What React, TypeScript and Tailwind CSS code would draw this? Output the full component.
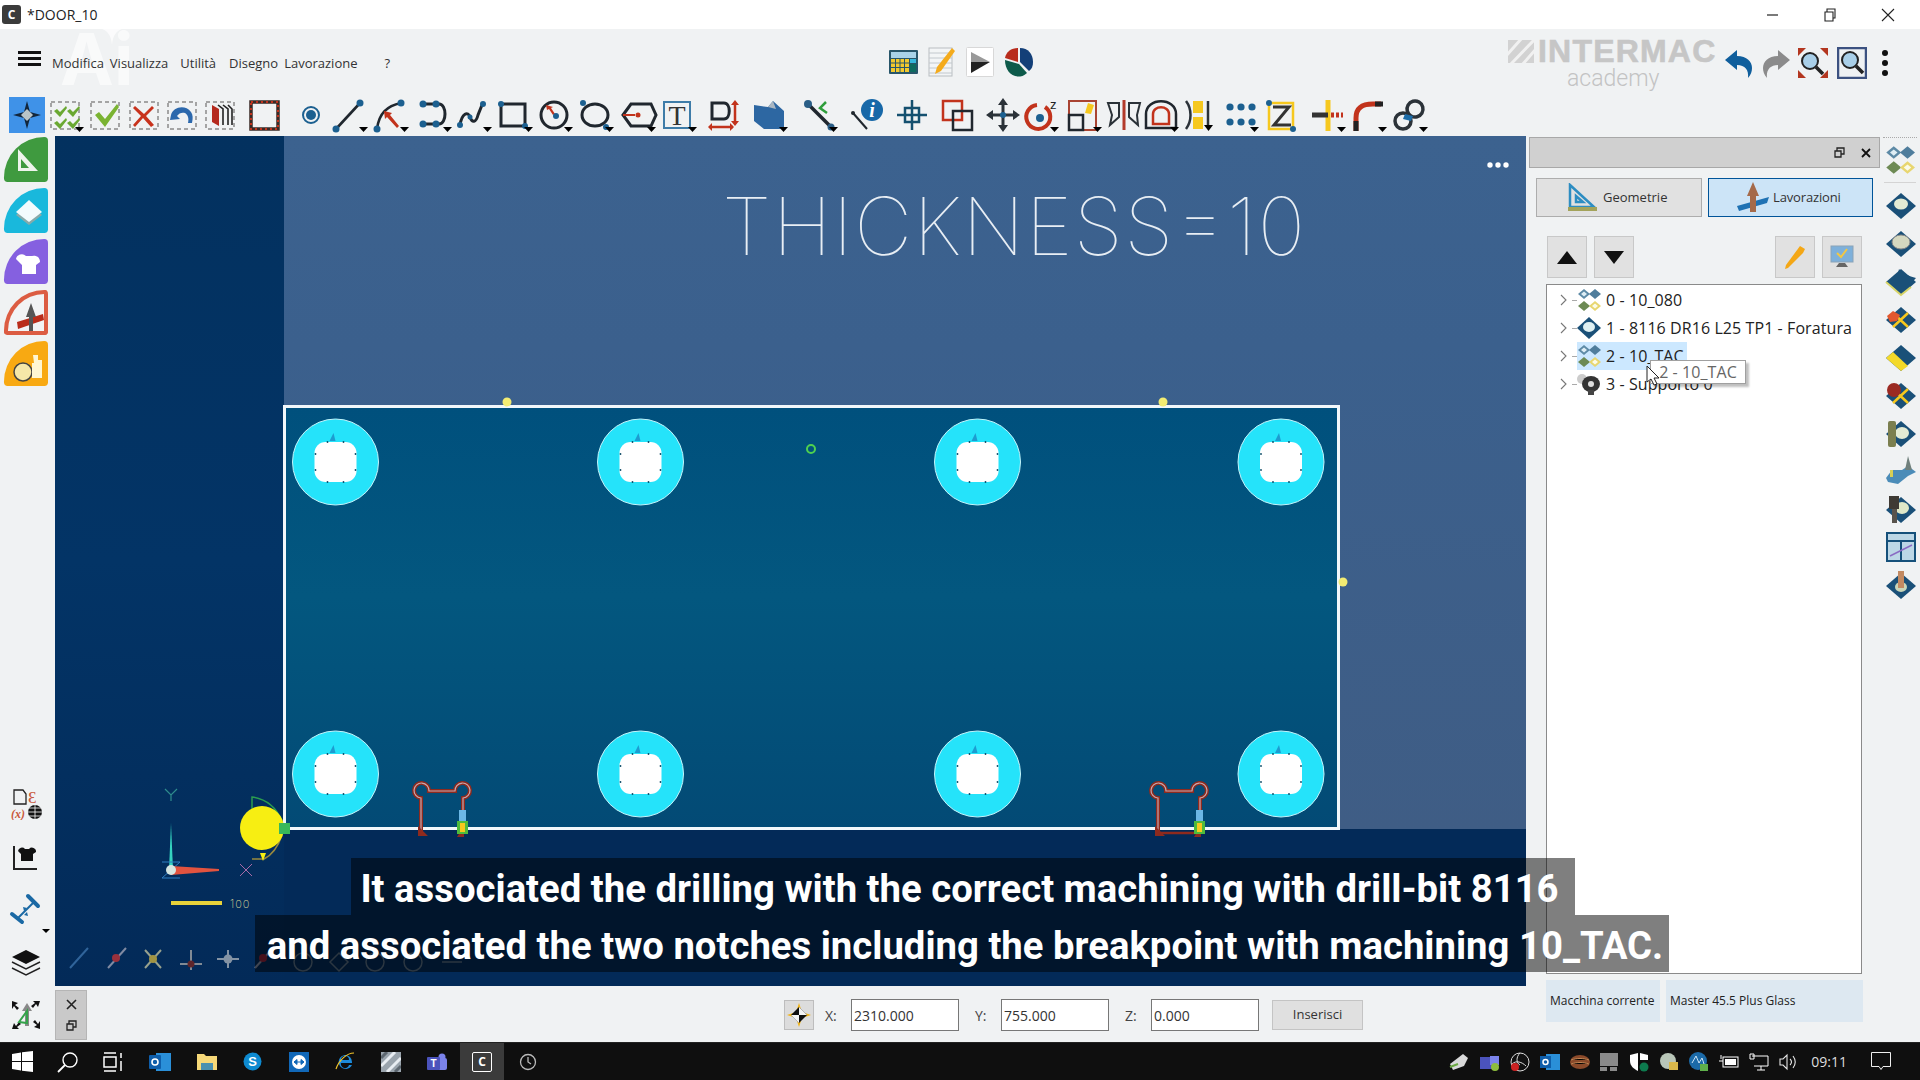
import React from "react";

const DK = "#20272e";
const BL = "#1c6090";
const RD = "#c2331c";
const YL = "#f6c81e";

const Caret = () => <path d="M27 30h9l-4.5 5z" fill="#000" />;
const Dash = () => <rect x="3" y="5" width="28" height="27" fill="none" stroke="#8a8a8a" strokeWidth="1.5" strokeDasharray="4 3" />;
const Dot = ({ x, y, r = 3, c = BL }: { x: number; y: number; r?: number; c?: string }) => <circle cx={x} cy={y} r={r} fill={c} />;
const Chk = ({ x, y, s = 1 }: { x: number; y: number; s?: number }) => (
  <path transform={`translate(${x} ${y}) scale(${s})`} d="M0 5l3-2 3 3 6-6 1 2-7 9z" fill="#6aa832" />
);

const tool: Record<string, React.ReactNode> = {
  select: (
    <>
      <rect width="36" height="36" fill="#3f92e8" />
      <path d="M18 4l3 11 11 3-11 3-3 11-3-11-11-3 11-3z" fill="#12263c" />
      <path d="M18 12l6 6-6 6-6-6z" fill="#b9c4c8" />
    </>
  ),
  checks: (
    <>
      <Dash />
      <Chk x={6} y={9} />
      <Chk x={19} y={9} />
      <Chk x={6} y={21} />
      <Chk x={19} y={21} />
      <Caret />
    </>
  ),
  check: (
    <>
      <Dash />
      <path d="M7 18l4-3 6 7L29 7l2 3-14 20z" fill="#7ab332" />
    </>
  ),
  cross: (
    <>
      <Dash />
      <path d="M8 9l9 8 8-8 2 2-8 8 8 9-3 2-8-9-8 9-2-2 8-9-8-8z" fill="#c8321c" />
    </>
  ),
  undoBox: (
    <>
      <Dash />
      <path d="M6 18c2-8 14-11 20-3 2 3 2 6 1 11h-4c1-5 0-8-3-10-3-1-6 0-8 3l3 3-10 1z" fill="#2c68ac" />
    </>
  ),
  layers: (
    <>
      <Dash />
      <path d="M9 8l7 4v17l-7-4z" fill="#b52a1e" />
      <path d="M15 8l5 4v16M20 8l5 4v16M25 8l4 4v16" fill="none" stroke="#222" strokeWidth="1.6" />
    </>
  ),
  square: (
    <>
      <rect x="4" y="5" width="27" height="27" fill="none" stroke="#3a2a26" strokeWidth="3.5" />
      <rect x="4" y="5" width="27" height="27" fill="none" stroke={RD} strokeWidth="2" strokeDasharray="2 3" />
    </>
  ),
  point: (
    <>
      <circle cx="18" cy="18" r="8" fill="none" stroke={BL} strokeWidth="2" />
      <Dot x={18} y={18} r={5} />
    </>
  ),
  line: (
    <>
      <path d="M4 32L28 6" stroke={DK} strokeWidth="2.6" />
      <Dot x={4} y={32} r={3.5} />
      <Dot x={28} y={6} r={3.5} />
      <Caret />
    </>
  ),
  arc: (
    <>
      <path d="M4 32C6 16 14 9 28 6" fill="none" stroke={DK} strokeWidth="2.6" />
      <path d="M11 14l8 2-2 2 9 11-2 2-10-11-2 2z" fill={RD} />
      <Dot x={4} y={32} r={3.5} />
      <Dot x={28} y={6} r={3.5} />
      <Caret />
    </>
  ),
  slot: (
    <>
      <path d="M7 7h16c8 0 8 20 0 20H7" fill="none" stroke={DK} strokeWidth="3" />
      <Dot x={7} y={7} r={3.5} />
      <Dot x={20} y={7} r={3.5} />
      <Dot x={7} y={27} r={3.5} />
      <Dot x={20} y={27} r={3.5} />
      <Caret />
    </>
  ),
  spline: (
    <>
      <path d="M4 28c2-12 8-14 10-8s6 6 8-2l4-10" fill="none" stroke={DK} strokeWidth="3" />
      <Dot x={4} y={28} r={3} />
      <Dot x={27} y={7} r={3} />
      <Dot x={14} y={20} r={2.5} />
      <Caret />
    </>
  ),
  rect: (
    <>
      <rect x="4" y="7" width="24" height="22" fill="none" stroke={DK} strokeWidth="3" />
      <Dot x={4} y={7} r={3} />
      <Dot x={28} y={29} r={3} />
      <Caret />
    </>
  ),
  circle: (
    <>
      <circle cx="17" cy="18" r="13" fill="none" stroke={DK} strokeWidth="3" />
      <path d="M9 8l7 2-2 1 4 6-2 1-4-6-2 1z" fill={RD} />
      <Dot x={19} y={19} r={3} />
      <Caret />
    </>
  ),
  ellipse: (
    <>
      <ellipse cx="17" cy="18" rx="13" ry="11" fill="none" stroke={DK} strokeWidth="3" />
      <Dot x={5} y={6} r={3} />
      <Dot x={28} y={30} r={3} />
      <Caret />
    </>
  ),
  hex: (
    <>
      <path d="M3 18l8-11h20l5 11-5 11H11z" fill="none" stroke={DK} strokeWidth="3" />
      <Dot x={18} y={18} r={2.5} c={RD} />
      <path d="M3 18h12" stroke={RD} strokeWidth="2" />
      <Caret />
    </>
  ),
  text: (
    <>
      <rect x="3" y="5" width="26" height="26" fill="none" stroke="#3e7ca8" strokeWidth="2" />
      <text x="16" y="28" fontFamily="Liberation Serif" fontSize="28" textAnchor="middle" fill="#333">T</text>
      <Caret />
    </>
  ),
  dim: (
    <>
      <path d="M6 6h12c7 0 7 16 0 16H6z" fill="none" stroke={DK} strokeWidth="3" />
      <path d="M29 6v20M5 30h22" stroke={RD} strokeWidth="2.5" />
      <path d="M25 8l4-5 4 5zM25 24l4 5 4-5zM6 26l-4 4 4 4zM24 26l4 4-4 4z" fill={RD} />
    </>
  ),
  solid: (
    <>
      <path d="M2 8l14 2 5-6 11 10v18H12L2 24z" fill="#2d67a2" />
      <path d="M16 10l5-6 3 8z" fill="#aab7c2" />
      <Caret />
    </>
  ),
  tool: (
    <>
      <path d="M6 7l24 24" stroke={DK} strokeWidth="3.5" />
      <Dot x={6} y={7} r={4} c="#2a5e86" />
      <Dot x={29} y={30} r={3.5} c="#2a5e86" />
      <path d="M24 5l-6 6 7 5" fill="none" stroke="#2e9d3a" strokeWidth="2.5" />
      <Caret />
    </>
  ),
  info: (
    <>
      <path d="M3 16l14 16" stroke={DK} strokeWidth="2" />
      <Dot x={3} y={16} r={2} c={DK} />
      <circle cx="22" cy="13" r="11" fill="#1768a8" />
      <text x="22" y="20" fontFamily="Liberation Serif" fontStyle="italic" fontWeight="700" fontSize="20" textAnchor="middle" fill="#fff">i</text>
    </>
  ),
  crosshair: (
    <>
      <path d="M3 18h30M18 3v30" stroke="#14506f" strokeWidth="2.5" />
      <rect x="11" y="11" width="14" height="14" fill="none" stroke="#14506f" strokeWidth="2.5" />
    </>
  ),
  overlap: (
    <>
      <rect x="4" y="4" width="19" height="19" fill="none" stroke={RD} strokeWidth="2.5" />
      <rect x="14" y="14" width="19" height="19" fill="none" stroke={DK} strokeWidth="2.5" />
    </>
  ),
  move: (
    <>
      <path d="M18 5v26M5 18h26" stroke="#2b3238" strokeWidth="3" />
      <path d="M18 1l5 7H13zM18 35l5-7H13zM1 18l7-5v10zM35 18l-7-5v10z" fill="#2b3238" />
      <Dot x={18} y={18} r={3} />
    </>
  ),
  rotate: (
    <>
      <path d="M14 8a12 12 0 1 0 8 2" fill="none" stroke={RD} strokeWidth="4" />
      <Dot x={17} y={21} r={4} />
      <text x="27" y="12" fontFamily="Liberation Sans" fontSize="13" fill="#222">z</text>
      <Caret />
    </>
  ),
  scale: (
    <>
      <rect x="3" y="4" width="27" height="29" fill="none" stroke="#a94432" strokeWidth="2" />
      <rect x="3" y="18" width="14" height="15" fill="none" stroke={DK} strokeWidth="2.5" />
      <path d="M22 6l6 2-3 9-6-1z" fill={YL} />
      <Caret />
    </>
  ),
  mirror: (
    <>
      <path d="M18 3v30" stroke="#b33a2a" strokeWidth="3" />
      <path d="M13 6H2l4 12-2 10 9-8zM23 6h11l-3 12 1 10-9-8z" fill="none" stroke="#2b3238" strokeWidth="2" />
    </>
  ),
  arch: (
    <>
      <path d="M3 31V17C3 0 33 0 33 17v14z" fill="none" stroke={DK} strokeWidth="2.5" />
      <path d="M10 27V17c0-9 16-9 16 0v10z" fill="none" stroke={RD} strokeWidth="2.5" />
      <Caret />
    </>
  ),
  array: (
    <>
      <path d="M4 4c6 8 6 20 0 28" fill="none" stroke="#2b3238" strokeWidth="2.5" />
      <rect x="11" y="4" width="10" height="12" fill={YL} />
      <rect x="11" y="20" width="10" height="12" fill={YL} />
      <path d="M26 4v26" stroke="#2b3238" strokeWidth="2.5" />
      <path d="M22 28h9l-4.5 6z" fill="#000" />
    </>
  ),
  dots: (
    <>
      {[7, 18, 29].flatMap((x) => [10, 25].map((y) => <Dot key={`${x}${y}`} x={x} y={y} r={3.6} />))}
      <Caret />
    </>
  ),
  zed: (
    <>
      <rect x="5" y="6" width="24" height="26" fill="none" stroke={YL} strokeWidth="2.5" />
      <path d="M9 10h16L10 28h17" fill="none" stroke="#333" strokeWidth="3" />
      <Dot x={5} y={6} r={3} />
      <Dot x={29} y={32} r={3} />
    </>
  ),
  plus: (
    <>
      <path d="M18 3v31" stroke={YL} strokeWidth="5" />
      <path d="M2 18h16" stroke="#333" strokeWidth="5" />
      <path d="M21 18h12" stroke={RD} strokeWidth="5" strokeDasharray="3 2" />
      <Caret />
    </>
  ),
  fillet: (
    <>
      <path d="M5 34V21C5 10 12 7 22 7h8" fill="none" stroke={RD} strokeWidth="5" />
      <path d="M5 34V24M24 7h8" fill="none" stroke="#222" strokeWidth="5" />
      <Caret />
    </>
  ),
  link: (
    <>
      <circle cx="23" cy="12" r="8" fill="none" stroke="#2b3238" strokeWidth="3.5" transform="rotate(30 23 12)" />
      <circle cx="11" cy="24" r="8" fill="none" stroke="#2b3238" strokeWidth="3.5" />
      <path d="M13 17l8 2-2 5-8-2z" fill="#1c6ca8" />
      <Caret />
    </>
  ),
};

const toolbar: [string, string][] = [
  ["select", ""],
  ["checks", "ml-[3px]"],
  ["check", "ml-[4px]"],
  ["cross", "ml-[3px]"],
  ["undoBox", "ml-[2px]"],
  ["layers", "ml-[2px]"],
  ["square", "ml-[8px]"],
  ["point", "ml-[10px]"],
  ["line", "ml-[3px]"],
  ["arc", "ml-[5px]"],
  ["slot", "ml-[7px]"],
  ["spline", "ml-[4px]"],
  ["rect", "ml-[5px]"],
  ["circle", "ml-[4px]"],
  ["ellipse", "ml-[5px]"],
  ["hex", "ml-[6px]"],
  ["text", "ml-[5px]"],
  ["dim", "ml-[9px]"],
  ["solid", "ml-[10px]"],
  ["tool", "ml-[14px]"],
  ["info", "ml-[12px]"],
  ["crosshair", "ml-[8px]"],
  ["overlap", "ml-[9px]"],
  ["move", "ml-[10px]"],
  ["rotate", "ml-[2px]"],
  ["scale", "ml-[7px]"],
  ["mirror", "ml-[4px]"],
  ["arch", "ml-[1px]"],
  ["array", "ml-[3px]"],
  ["dots", "ml-[5px]"],
  ["zed", "ml-[5px]"],
  ["plus", "ml-[10px]"],
  ["fillet", "ml-[5px]"],
  ["link", "ml-[5px]"],
];

const TitleBar = () => (
  <div className="h-[29px] bg-white flex items-center shrink-0">
    <div className="ml-[2px] w-[19px] h-[19px] rounded-[3px] bg-[#3b3b3b] flex items-center justify-center text-white text-[12px] font-bold">C</div>
    <div className="ml-[6px] text-[14px] text-[#222]">*DOOR_10</div>
    <div className="ml-auto flex items-center pr-[7px]">
      <svg width="60" height="20" viewBox="0 0 60 20"><path d="M24 10h11" stroke="#222" strokeWidth="1.2" /></svg>
      <svg width="58" height="20" viewBox="0 0 58 20"><path d="M22 7h8v9h-8zM24 7V4h8v9h-2" fill="none" stroke="#222" strokeWidth="1.1" /></svg>
      <svg width="52" height="20" viewBox="0 0 52 20"><path d="M21 4l12 12M33 4L21 16" stroke="#222" strokeWidth="1.1" /></svg>
    </div>
  </div>
);

const menuItems: [string, string][] = [
  ["Modifica", "ml-[11px]"],
  ["Visualizza", "ml-[6px]"],
  ["Utilità", "ml-[12px]"],
  ["Disegno", "ml-[13px]"],
  ["Lavorazione", "ml-[6px]"],
  ["?", "ml-[27px]"],
];

const MenuBar = () => (
  <div className="h-[59px] flex items-center shrink-0 relative">
    <span className="absolute left-[60px] -top-[6px] font-['Inter'] font-bold text-[72px] leading-[72px] text-white/60 select-none">Ai</span>
    <svg width="24" height="34" viewBox="0 0 24 34" className="absolute left-[100px] top-[-18px]"><path d="M12 0c1 10 4 14 12 17-8 3-11 7-12 17-1-10-4-14-12-17 8-3 11-7 12-17z" fill="#fff" fillOpacity=".7" /></svg>
    <div className="ml-[18px] w-[23px] h-[15px] flex flex-col justify-between relative">
      <div className="h-[3px] bg-[#111]" />
      <div className="h-[3px] bg-[#111]" />
      <div className="h-[3px] bg-[#111]" />
    </div>
    {menuItems.map(([t, m]) => (
      <span key={t} className={`${m} text-[13px] text-[#333] mt-[10px] relative`}>{t}</span>
    ))}
    <div className="absolute left-[889px] top-[18px] flex items-center gap-[10px]">
      <svg width="29" height="24" viewBox="0 0 29 24"><rect width="29" height="24" rx="1" fill="#28566a" /><rect x="2" y="2" width="25" height="6" fill="#a9d3e8" /><rect x="2" y="9" width="18" height="13" fill="#f2c92e" /><rect x="21" y="9" width="6" height="4" fill="#37b7dc" /><rect x="21" y="14" width="6" height="8" fill="#0e6b60" /><path d="M2 13h18M2 17.500h18M6.500 9v13M11 9v13M15.500 9v13" stroke="#28566a" /></svg>
      <svg width="28" height="30" viewBox="0 0 28 30"><rect x="1" y="1" width="23" height="28" fill="#f3f5f6" stroke="#b9bec2" /><path d="M1 6h23M1 11h23M1 16h23M1 21h23M1 26h23" stroke="#c2c8cd" /><path d="M24 1l3 3-14 20-6 3 2-7z" fill="#f4ab1c" /></svg>
      <svg width="28" height="30" viewBox="0 0 28 30"><rect x=".5" y=".5" width="27" height="29" rx="1" fill="#fff" stroke="#d8d8d8" /><path d="M5 5l19 10H5z" fill="#999" /><path d="M5 15h19L5 26z" fill="#222" /></svg>
      <svg width="30" height="30" viewBox="0 0 30 30"><path d="M14 1v14L1 11C2 5 7 1 14 1z" fill="#b82c1c" /><path d="M16 1c8 0 13 6 13 14 0 4-1 7-4 9l-9-9z" fill="#133f78" /><path d="M1 13l14 4 8 9c-3 3-6 3.500-9 3.500C6 29 1 22 1 13z" fill="#0d5a4a" /></svg>
    </div>
    <div className="ml-auto relative w-[412px] h-full flex items-center">
      <div className="absolute left-0 top-[11px] flex items-center">
        <svg width="26" height="23" viewBox="0 0 26 23"><rect width="26" height="23" fill="#d2d2d2" /><path d="M-2 16L14-2M2 25L26 0M14 25L28 9" stroke="#f1f1f1" strokeWidth="3" /></svg>
        <span className="ml-[4px] font-['Liberation_Sans'] font-bold text-[32px] leading-[23px] text-[#c6c6c6] tracking-[1.2px] [-webkit-text-stroke:0.6px_#c6c6c6]">INTERMAC</span>
      </div>
      <span className="absolute left-[59px] top-[35px] font-['Roboto'] font-light text-[23px] leading-[30px] text-[#c3c3c3]">academy</span>
      <div className="absolute left-[216px] top-[19px]">
        <svg width="30" height="30" viewBox="0 0 30 30"><path d="M1 12L13 2v6c10 0 15 6 15 12 0 3-1 7-4 10 1-8-3-13-11-13v5z" fill="#0f5e9c" /></svg>
      </div>
      <div className="absolute left-[253px] top-[19px]">
        <svg width="30" height="30" viewBox="0 0 30 30"><path d="M29 12L17 2v6C7 8 2 14 2 20c0 3 1 7 4 10-1-8 3-13 11-13v5z" fill="#8b8b8b" /></svg>
      </div>
      <div className="absolute left-[289px] top-[18px]">
        <svg width="32" height="32" viewBox="0 0 32 32"><path d="M1 1h8L1 9zM31 1v8l-8-8zM1 31v-8l8 8zM31 31h-8l8-8z" fill="#b3361f" /><circle cx="13" cy="14" r="8" fill="#a9cfe8" stroke="#222" strokeWidth="2" /><path d="M19 20l7 7" stroke="#222" strokeWidth="3.500" /></svg>
      </div>
      <div className="absolute left-[329px] top-[18px]">
        <svg width="30" height="32" viewBox="0 0 30 32"><rect x="1" y="1" width="28" height="30" fill="#eef1f3" stroke="#3b5180" strokeWidth="2.500" /><circle cx="13" cy="13" r="8" fill="#a9cfe8" stroke="#222" strokeWidth="2" /><path d="M19 19l7 7" stroke="#222" strokeWidth="3.500" /></svg>
      </div>
      <div className="absolute left-[374px] top-[21px] flex flex-col gap-[4px]">
        <div className="w-[6px] h-[6px] rounded-full bg-[#111]" />
        <div className="w-[6px] h-[6px] rounded-full bg-[#111]" />
        <div className="w-[6px] h-[6px] rounded-full bg-[#111]" />
      </div>
    </div>
  </div>
);

const Toolbar = () => (
  <div className="h-[48px] flex items-start pl-[9px] pt-[9px] shrink-0">
    {toolbar.map(([k, m]) => (
      <svg key={k} width="36" height="36" viewBox="0 0 36 36" className={`${m} shrink-0 overflow-visible`}>{tool[k]}</svg>
    ))}
  </div>
);

const quarter: [string, React.ReactNode][] = [
  ["bg-[#3f9a3f]", <path key="a" d="M14 12l20 22H14zM17 22v9h8z" fill="#eef4ec" fillRule="evenodd" />],
  ["bg-[#19b8dc]", <React.Fragment key="b"><path d="M12 27l13-12 13 12-13 10z" fill="#8aa" /><path d="M12 24l13-12 13 12-13 10z" fill="#f3fbfd" /></React.Fragment>],
  ["bg-[#8560e0]", <path key="c" d="M12 20a6 6 0 0 1 10-3h6a6 6 0 0 1 8 6l-4 3v9H18V26z" fill="#fff" />],
  ["bg-[#f2f3f4] border-[4px] border-[#dc5c42]", <g key="d" transform="translate(-4 -4)"><path d="M13 32l26-8 1 6-26 9z" fill="#b92c1a" /><path d="M27 13l5 14h-3v14h-4V27h-3z" fill="#555" /></g>],
  ["bg-[#f8a912]", <React.Fragment key="e"><circle cx="19" cy="31" r="9" fill="#f6e7a8" stroke="#444" strokeWidth="1.500" /><path d="M29 14h5v5h4v18H28V22h2z" fill="#fff6d2" /></React.Fragment>],
];

const LeftBar = () => (
  <div className="w-[55px] shrink-0 flex flex-col items-start pl-[4px] pt-[1px]">
    {quarter.map(([c, ic], i) => (
      <div key={i} className={`w-[44px] h-[45px] mb-[6px] rounded-tl-[44px] rounded-tr-[4px] rounded-b-[4px] overflow-hidden ${c}`}>
        <svg width="44" height="45" viewBox="0 0 44 45" className="block">{ic}</svg>
      </div>
    ))}
    <div className="flex flex-col mt-[396px] ml-[7px] gap-[23px]">
      <svg width="32" height="32" viewBox="0 0 32 32"><path d="M3 2h9l3 4v10H3z" fill="none" stroke="#222" strokeWidth="1.300" /><text x="17" y="15" fontSize="17" fontFamily="Liberation Serif" fill="#c9583c">Ɛ</text><text x="0" y="30" fontSize="12" fontStyle="italic" fontWeight="700" fontFamily="Liberation Serif" fill="#c9583c">(x)</text><circle cx="24" cy="24" r="7" fill="#111" /><path d="M17 24h14M24 17v14M18 20h12M18 28h12" stroke="#fff" strokeWidth=".8" /></svg>
      <svg width="28" height="28" viewBox="0 0 28 28"><path d="M3 3v23h23" fill="none" stroke="#222" strokeWidth="2" /><path d="M7 8a4 4 0 0 1 7-2h4a4 4 0 0 1 7 3l-3 2v7H10v-7z" fill="#111" /></svg>
      <svg width="30" height="32" viewBox="0 0 30 32" className="-ml-[1px] overflow-visible"><path d="M2 20l10 8M18 2l10 10" stroke="#1a69a4" strokeWidth="4" strokeLinecap="round" /><path d="M8 24L24 8" stroke="#1a69a4" strokeWidth="2" /><path d="M13 13l4 1-3 3zM18 22l-4-1 3-3z" fill="#1a69a4" /><path d="M32 35h8l-4 4z" fill="#000" /></svg>
      <svg width="30" height="28" viewBox="0 0 30 28"><path d="M15 1l14 7-14 7L1 8z" fill="#111" /><path d="M1 13l14 7 14-7M1 19l14 7 14-7" fill="none" stroke="#222" strokeWidth="1.400" /></svg>
      <svg width="30" height="30" viewBox="0 0 30 30"><path d="M1 1l6 2-3 2 4 3-2 2-3-4-2 3zM29 1l-2 6-2-3-3 4-2-2 4-3-2-2zM1 29l2-6 2 3 3-4 2 2-4 3 2 2zM29 29l-6-2 3-2-4-3 2-2 3 4 2-3z" fill="#111" /><path d="M16 3l5 8h-3v15h-4V11h-3z" fill="#888" /><path d="M8 22l8-11v12z" fill="none" stroke="#34a34a" strokeWidth="2" /></svg>
    </div>
  </div>
);

const holesX = [335.5, 640.5, 977.5, 1281];
const holesY = [462, 774];
const ticks: [number, number][] = [[-8, -20], [8, -20], [-20, -8], [20, -8], [-20, 8], [20, 8], [-8, 20], [8, 20]];

const Notch = ({ x, base }: { x: number; base?: boolean }) => {
  const d = `M${x} 834V798A7.500 7.500 0 1 1 ${x + 8} 791H${x + 34}A7.500 7.500 0 1 1 ${x + 42} 798V834`;
  return (
    <g fill="none">
      <path d={d} stroke="#8e2a1e" strokeWidth="4" />
      <path d={d} stroke="#c9a8ae" strokeWidth="1.200" />
      {base && <path d={`M${x} 833H${x + 42}`} stroke="#8e2a1e" strokeWidth="2.500" />}
      <path d={`M${x - 3} 826l10 10h-10zM${x + 36} 837l7-11v11z`} fill="#8e2a1e" />
      <rect x={x + 38} y={810} width="7" height="11" fill="#6cb7e6" />
      <rect x={x + 36} y={821} width="11" height="13" fill="#4fbb3c" />
      <rect x={x + 39} y={823} width="5" height="9" fill={YL} />
    </g>
  );
};

const Canvas = () => (
  <div className="relative h-[850px] bg-[#032f60] overflow-hidden">
    <svg width="1471" height="850" viewBox="55 136 1471 850" className="block">
      <defs>
        <linearGradient id="sheet" x1="0" y1="0" x2="0" y2="1">
          <stop offset="0" stopColor="#00507d" />
          <stop offset=".45" stopColor="#03577f" />
          <stop offset="1" stopColor="#034a75" />
        </linearGradient>
        <linearGradient id="dark" x1="0" y1="0" x2="0" y2="1">
          <stop offset="0" stopColor="#03315f" />
          <stop offset=".5" stopColor="#033466" />
          <stop offset="1" stopColor="#032a58" />
        </linearGradient>
        <linearGradient id="top" x1="0" y1="0" x2="0" y2="1">
          <stop offset="0" stopColor="#3c628f" />
          <stop offset=".3" stopColor="#3b608d" />
          <stop offset="1" stopColor="#3f5d85" />
        </linearGradient>
      </defs>
      <rect x="55" y="136" width="1471" height="850" fill="url(#dark)" />
      <rect x="284" y="136" width="1242" height="693" fill="url(#top)" />
      <rect x="284" y="829" width="1242" height="157" fill="#032a58" />
      <text x="722" y="255" textLength="583" lengthAdjust="spacing" fontFamily="Inter" fontWeight="100" fontSize="80" fill="#e8eef4">THICKNESS=10</text>
      <rect x="284.500" y="406.500" width="1054" height="422" fill="url(#sheet)" stroke="#f2f7fa" strokeWidth="3" />
      {holesY.flatMap((y) =>
        holesX.map((x) => (
          <g key={`${x}-${y}`}>
            <circle cx={x} cy={y} r="43" fill="#25e3fa" stroke="#c4f4fb" />
            <rect x={x - 21} y={y - 20} width="42" height="40" rx="11" fill="#fff" />
            {ticks.map(([a, b]) => (
              <circle key={`${a}${b}`} cx={x + a} cy={y + b} r=".9" fill="#0b4a66" />
            ))}
            <path d={`M${x - 6} ${y - 21}l4-8 2 8z`} fill="#1d9cd0" />
          </g>
        ))
      )}
      <circle cx="507" cy="402" r="4.500" fill="#f3ec72" />
      <circle cx="1163" cy="402" r="4.500" fill="#f3ec72" />
      <circle cx="1343" cy="582" r="4.500" fill="#f3ec72" />
      <circle cx="811" cy="449" r="4" fill="none" stroke="#4fd14f" strokeWidth="2" />
      <Notch x={421} />
      <Notch x={1158} base />
      <circle cx="1490" cy="165" r="2.700" fill="#fff" />
      <circle cx="1498" cy="165" r="2.700" fill="#fff" />
      <circle cx="1506" cy="165" r="2.700" fill="#fff" />
      <path d="M252 833V797c14 2 24 10 30 24" fill="none" stroke="#2b9d4f" strokeWidth="1.500" />
      <path d="M252 859h12c8-4 14-12 18-24" fill="none" stroke="#9a8a3e" strokeWidth="1.500" />
      <circle cx="262" cy="828" r="22" fill="#f7ee12" />
      <rect x="279" y="823" width="11" height="11" fill="#38b95a" />
      <path d="M260 853h6l-3 8z" fill="#f7ee12" />
      <path d="M165 789l6 6 6-6M171 795v6" fill="none" stroke="#2f8d8d" strokeWidth="1.200" />
      <path d="M169 870L171 823 173 870z" fill="#35d3c0" />
      <path d="M162 862h18l-18 16h18" fill="none" stroke="#2f7fc2" strokeWidth="1" />
      <path d="M171 866l48 3v2l-48 4z" fill="#e2533f" />
      <circle cx="171" cy="870" r="5" fill="#d7e7e2" />
      <path d="M240 864l12 12M252 864l-12 12" stroke="#a86aa8" strokeWidth="1" />
      <rect x="171" y="901" width="51" height="4" fill="#e8d23a" />
      <text x="230" y="908" fontFamily="Inter" fontWeight="200" fontSize="11" letterSpacing="1" fill="#d8d99a">100</text>
      <g strokeWidth="2" opacity=".75">
        <path d="M70 968l18-20" stroke="#3f77b0" />
        <path d="M108 968l18-20" stroke="#aab" />
        <circle cx="116" cy="958" r="4" fill="#c33" />
        <path d="M145 950l16 18M161 950l-16 18" stroke="#c9c9a0" />
        <circle cx="153" cy="959" r="4" fill="#d6b73c" />
        <path d="M180 964h22M191 950v20" stroke="#aaa" />
        <circle cx="191" cy="964" r="3.500" fill="#7c241c" />
        <path d="M217 959h22M228 950v18" stroke="#b0b6be" />
        <circle cx="228" cy="959" r="4.500" fill="#b0b6be" />
        <path d="M255 968l18-20" stroke="#aab" />
        <circle cx="263" cy="958" r="4" fill="#b23" />
      </g>
      <g fill="none" stroke="#7a8a94" strokeWidth="1.500" opacity=".7">
        <circle cx="303" cy="962" r="9" />
        <path d="M330 962l9-9 9 9-9 9z" />
        <circle cx="375" cy="962" r="9" />
        <circle cx="413" cy="962" r="9" />
        <path d="M442 962h20" />
      </g>
    </svg>
  </div>
);

const Captions = () => (
  <div className="absolute left-[255px] top-[858px] w-[1414px] flex flex-col items-center font-['Roboto'] font-bold text-white text-[38.3px] leading-[57px] whitespace-nowrap">
    <div className="bg-black/50 w-[1224px] mr-[-1px] text-center h-[57px] pt-[2px] pr-[6px]">It associated the drilling with the correct machining with drill-bit 8116</div>
    <div className="bg-black/50 w-[1414px] text-center h-[57px] pt-[2px] pl-[6px]">and associated the two notches including the breakpoint with machining 10_TAC.</div>
  </div>
);

const BottomBar = () => (
  <div className="h-[56px] flex items-center relative pt-[2px]">
    <div className="w-[32px] h-[50px] bg-[#c9c9c9] border border-[#b5b5b5] flex flex-col items-center justify-between py-[8px]">
      <svg width="11" height="11" viewBox="0 0 11 11"><path d="M1 1l9 9M10 1l-9 9" stroke="#222" strokeWidth="1.600" /></svg>
      <svg width="11" height="11" viewBox="0 0 11 11"><path d="M1 4h6v6H1zM3 4V1h7v6H7" fill="none" stroke="#222" strokeWidth="1.300" /></svg>
    </div>
    <div className="ml-[697px] w-[30px] h-[30px] bg-[#dcdcdc] border border-[#bdbdbd] flex items-center justify-center">
      <svg width="26" height="26" viewBox="0 0 26 26"><path d="M13 1l2 6h-4zM13 25l2-6h-4zM1 13l6-2v4zM25 13l-6-2v4z" fill="#f2b417" /><path d="M13 5l8 8-8 8-8-8z" fill="#111" /><path d="M13 5l8 8h-8zM13 21l-8-8h8z" fill="#f4f4f4" /></svg>
    </div>
    <span className="ml-[11px] w-[26px] text-[14px] text-[#444]">X:</span>
    <div className="w-[108px] h-[32px] bg-white border border-[#777] flex items-center pl-[2px] text-[14px] text-[#333]">2310.000</div>
    <span className="ml-[16px] w-[26px] text-[14px] text-[#444]">Y:</span>
    <div className="w-[108px] h-[32px] bg-white border border-[#777] flex items-center pl-[2px] text-[14px] text-[#333]">755.000</div>
    <span className="ml-[16px] w-[26px] text-[14px] text-[#444]">Z:</span>
    <div className="w-[108px] h-[32px] bg-white border border-[#777] flex items-center pl-[2px] text-[14px] text-[#333]">0.000</div>
    <div className="ml-[13px] w-[91px] h-[30px] bg-[#e0e0e0] border border-[#c4c4c4] flex items-center justify-center text-[13px] text-[#333]">Inserisci</div>
  </div>
);

const Dia = ({ children }: { children?: React.ReactNode }) => (
  <svg width="30" height="30" viewBox="0 0 30 30" className="block overflow-visible">
    <path d="M15 3l15 13-15 13L0 16z" fill="#1a5078" />
    {children}
  </svg>
);

const Mini = () => (
  <svg width="24" height="24" viewBox="0 0 24 24" className="shrink-0">
    <path d="M7 1l6 5-6 5-6-5z" fill="#5d8aa6" /><path d="M7 3.500l3 2.500-3 2.500-3-2.500z" fill="#dfeef5" />
    <path d="M18 1l6 5-6 5-6-5z" fill="#4f7d9c" />
    <path d="M7 13l6 5-6 5-6-5z" fill="#6d8a54" /><path d="M18 13l6 5-6 5-6-5z" fill="#e8d670" /><path d="M18 15.500l3 2.500-3 2.500-3-2.500z" fill="#fbfbe8" />
  </svg>
);

const RightBar = () => (
  <div className="w-[40px] shrink-0 flex flex-col items-center">
    <div className="w-[34px] border-t border-dotted border-[#aaa] mt-[1px]" />
    <div className="mt-[10px] scale-[1.25]"><Mini /></div>
    <div className="w-[32px] h-px bg-[#d4d4d4] mt-[10px] mb-[7px]" />
    <div className="flex flex-col gap-[8px] pl-[1px]">
      <Dia><ellipse cx="15" cy="14" rx="7" ry="5.500" fill="#e3ebd4" /></Dia>
      <Dia><ellipse cx="15" cy="14" rx="9" ry="7" fill="#d5d8c0" stroke="#888" /></Dia>
      <Dia><path d="M0 16c8-1 12-7 13-13 4 5 10 7 17 9-4 4-5 6-5 9l-10 8z" fill="#1a5078" /><path d="M0 16l15 13 10-8" fill="none" stroke="#d7d466" strokeWidth="2" /></Dia>
      <Dia><path d="M7 9l15 14M22 9L7 23" stroke={YL} strokeWidth="2.500" /><path d="M1 12l6-5 7 4-3 6-7 1z" fill="#e2572e" /></Dia>
      <Dia><path d="M0 16l7-6 15 14-7 5z" fill="#f3d92a" /></Dia>
      <Dia><path d="M7 9l15 14M22 9L7 23" stroke={YL} strokeWidth="2.500" /><circle cx="8" cy="10" r="7" fill="#9b2a22" /></Dia>
      <Dia><ellipse cx="16" cy="15" rx="7" ry="6" fill="#e3ebd4" /><rect x="2" y="3" width="8" height="26" rx="2" fill="#7b7f4f" /></Dia>
      <svg width="30" height="30" viewBox="0 0 30 30"><path d="M0 22l6-8h10l6-4 8 6-8 4-10 8-10-2z" fill="#4b8cb8" /><path d="M19 14l3-14 4 14z" fill="#70807c" /><rect x="4" y="14" width="3" height="7" fill="#d8cf55" /></svg>
      <Dia><ellipse cx="16" cy="14" rx="7" ry="6" fill="#dfe8c8" /><rect x="3" y="2" width="10" height="13" fill="#3e3a34" /><rect x="6" y="15" width="5" height="14" fill="#58534c" /></Dia>
      <svg width="30" height="30" viewBox="0 0 30 30"><rect x="1" y="1" width="28" height="28" fill="#bcd7e6" stroke="#15507a" strokeWidth="2" /><path d="M1 9h28M15 9v20" stroke="#15507a" strokeWidth="2" /><path d="M4 24l22-11" stroke="#8a6bc4" strokeWidth="1.500" /></svg>
      <Dia><ellipse cx="15" cy="17" rx="6" ry="5" fill="#c9d6b8" /><rect x="12" y="1" width="6" height="17" fill="#c28a62" /></Dia>
    </div>
  </div>
);

const rows: [React.ReactNode, string, boolean][] = [
  [<Mini key="0" />, "0 - 10_080", false],
  [<svg key="1" width="24" height="22" viewBox="0 0 24 22"><path d="M12 0l12 11-12 11L0 11z" fill="#1a5078" /><ellipse cx="12" cy="10" rx="6" ry="5" fill="#dff0f2" /></svg>, "1 - 8116 DR16 L25 TP1 - Foratura", false],
  [<Mini key="2" />, "2 - 10_TAC", true],
  [<svg key="3" width="24" height="24" viewBox="0 0 24 24"><circle cx="5" cy="7" r="5" fill="#ccc" /><ellipse cx="14" cy="12" rx="9" ry="8" fill="#333" /><circle cx="14" cy="12" r="3" fill="#ddd" /><rect x="11" y="18" width="6" height="5" fill="#444" /></svg>, "3 - Supporto 0", false],
];

const Panel = () => (
  <div className="w-[351px] ml-[3px] shrink-0 flex flex-col pt-[1px]">
    <div className="h-[31px] bg-[#d0d0d0] border border-[#a8a8a8] flex items-center justify-end pr-[8px] gap-[16px]">
      <svg width="11" height="11" viewBox="0 0 11 11"><path d="M1 4h6v6H1zM3 4V1h7v6H7" fill="none" stroke="#222" strokeWidth="1.300" /></svg>
      <svg width="10" height="10" viewBox="0 0 10 10"><path d="M1 1l8 8M9 1L1 9" stroke="#111" strokeWidth="1.800" /></svg>
    </div>
    <div className="flex gap-[6px] ml-[7px] mt-[10px]">
      <div className="w-[166px] h-[39px] bg-[#e1e1e1] border border-[#adadad] flex items-center pl-[31px] text-[13px] text-[#333]">
        <svg width="31" height="30" viewBox="0 0 31 30"><path d="M2 2l24 22H2zM8 13v6h7z" fill="none" stroke="#2d8dc2" strokeWidth="2.500" /><rect x="0" y="24" width="29" height="4" fill="#a3a35a" /></svg>
        <span className="ml-[4px]">Geometrie</span>
      </div>
      <div className="w-[165px] h-[39px] bg-[#cce4f7] border border-[#005499] flex items-center pl-[28px] text-[13px] text-[#333]">
        <svg width="32" height="32" viewBox="0 0 32 32"><path d="M0 24l32-9-2 6-28 8z" fill="#1f72b4" /><path d="M16 0l6 14h-3v16h-6V14h-3z" fill="#a56a4a" /></svg>
        <span className="ml-[4px] tracking-[-0.15px]">Lavorazioni</span>
      </div>
    </div>
    <div className="flex ml-[18px] mt-[19px] w-[315px] h-[42px]">
      <div className="w-[40px] h-[42px] bg-[#e1e1e1] border border-[#c8c8c8] flex items-center justify-center"><svg width="20" height="13" viewBox="0 0 20 13"><path d="M10 0l10 13H0z" fill="#111" /></svg></div>
      <div className="ml-[7px] w-[40px] h-[42px] bg-[#e1e1e1] border border-[#c8c8c8] flex items-center justify-center"><svg width="20" height="13" viewBox="0 0 20 13"><path d="M10 13L20 0H0z" fill="#111" /></svg></div>
      <div className="ml-auto w-[40px] h-[42px] bg-[#e1e1e1] border border-[#c8c8c8] flex items-center justify-center"><svg width="22" height="24" viewBox="0 0 22 24"><path d="M16 1l5 3-2 4L4 23l-3 1 1-4z" fill="#f4a716" /></svg></div>
      <div className="ml-[7px] w-[40px] h-[42px] bg-[#e1e1e1] border border-[#c8c8c8] flex items-center justify-center"><svg width="24" height="24" viewBox="0 0 24 24"><rect x="1" y="1" width="22" height="16" fill="#7eb0da" stroke="#8aa3b8" /><path d="M7 8l4 4 6-8" fill="none" stroke="#f2c744" strokeWidth="2" /><path d="M6 22h12l-3-4H9z" fill="#666" /></svg></div>
    </div>
    <div className="relative ml-[17px] mt-[6px] w-[316px] h-[690px] bg-white border border-[#8a8a8a] pt-[1px] text-[16px] tracking-[0.08px] text-[#222]">
      {rows.map(([ic, t, sel]) => (
        <div key={t} className="h-[28px] flex items-center">
          <svg width="8" height="12" viewBox="0 0 8 12" className="ml-[13px] shrink-0"><path d="M1 1l5 5-5 5" fill="none" stroke="#777" strokeWidth="1.100" /></svg>
          <span className="w-[5px] ml-[4px] border-t border-dashed border-[#aaa]" />
          <div className={`flex items-center h-[28px] ${sel ? "bg-[#cce8ff] pr-[3px]" : ""}`}>
            {ic}
            <span className="ml-[5px] whitespace-nowrap">{t}</span>
          </div>
        </div>
      ))}
      <div className="absolute left-[103px] top-[75px] w-[96px] h-[24px] bg-white border border-[#a0a0a0] shadow-[3px_3px_2px_rgba(0,0,0,0.25)] flex items-center justify-center text-[16px] text-[#666]">2 - 10_TAC</div>
      <svg width="14" height="21" viewBox="0 0 14 21" className="absolute left-[99px] top-[80px]"><path d="M1 1v16l4-3 3 6 3-1-3-6h5z" fill="#fff" stroke="#222" /></svg>
    </div>
    <div className="flex ml-[17px] mt-[6px] h-[42px] gap-[6px] text-[12px] text-[#222]">
      <div className="w-[114px] bg-[#dde8f1] flex items-center pl-[4px] whitespace-nowrap">Macchina corrente</div>
      <div className="w-[197px] bg-[#dde8f1] flex items-center pl-[4px] whitespace-nowrap">Master 45.5 Plus Glass</div>
    </div>
  </div>
);

const Taskbar = () => (
  <div className="h-[38px] bg-[#0f0f0f] border-t border-[#222] flex items-center shrink-0 text-white relative">
    <div className="flex items-center pl-[12px]">
      <svg width="21" height="21" viewBox="0 0 21 21"><path d="M0 3l9-1.500V10H0zM10 1.300L21 0v10H10zM0 11h9v8.500L0 18zM10 11h11v10l-11-1.300z" fill="#fff" /></svg>
      <svg width="22" height="22" viewBox="0 0 22 22" className="ml-[24px]"><circle cx="13" cy="9" r="7" fill="none" stroke="#fff" strokeWidth="1.400" /><path d="M8 14l-7 7" stroke="#fff" strokeWidth="1.800" /></svg>
      <svg width="22" height="20" viewBox="0 0 22 20" className="ml-[23px]"><path d="M2 1h12M2 19h12M2 5h12v10H2zM19 1v5M19 9v10" fill="none" stroke="#fff" strokeWidth="1.500" /></svg>
      <svg width="22" height="20" viewBox="0 0 22 20" className="ml-[25px]"><rect x="7" y="1" width="15" height="18" fill="#2a8fd8" /><rect x="0" y="3" width="12" height="14" rx="1" fill="#0f5eaa" /><circle cx="6" cy="10" r="3" fill="none" stroke="#fff" strokeWidth="1.600" /></svg>
      <svg width="20" height="18" viewBox="0 0 20 18" className="ml-[26px]"><path d="M0 1h7l2 2h11v14H0z" fill="#f6d878" /><rect x="4" y="10" width="12" height="7" fill="#4a90b0" /></svg>
      <svg width="19" height="19" viewBox="0 0 19 19" className="ml-[26px]"><circle cx="9.500" cy="9.500" r="9" fill="#0e8ad0" /><text x="9.500" y="14" fontSize="13" fontWeight="700" textAnchor="middle" fill="#fff" fontFamily="Liberation Sans">S</text></svg>
      <svg width="20" height="20" viewBox="0 0 20 20" className="ml-[27px]"><rect width="20" height="20" fill="#1168b8" /><circle cx="10" cy="10" r="7" fill="#fff" /><path d="M5 10h10M5 10l3-2.500v5zM15 10l-3-2.500v5z" stroke="#1168b8" fill="#1168b8" /></svg>
      <svg width="20" height="20" viewBox="0 0 20 20" className="ml-[26px]"><path d="M10 3a7 7 0 0 1 7 7v1H6a4 4 0 0 0 8 2h3a7 7 0 1 1-7-10zM6 8h8a4 4 0 0 0-8 0z" fill="#1c8bdc" /><path d="M1 17C4 8 12 1 19 1" fill="none" stroke="#f3c52a" strokeWidth="1.200" /></svg>
      <svg width="20" height="20" viewBox="0 0 20 20" className="ml-[26px]"><rect width="20" height="20" fill="#9aa4ad" /><path d="M0 14L14 0M6 20L20 6" stroke="#e8edf2" strokeWidth="3" /><path d="M0 6l6-6M14 20l6-6" stroke="#5d6770" strokeWidth="3" /></svg>
      <svg width="20" height="20" viewBox="0 0 20 20" className="ml-[26px]"><circle cx="15" cy="5" r="3.500" fill="#7b83eb" /><rect x="7" y="6" width="13" height="12" rx="2" fill="#7b83eb" /><rect x="0" y="5" width="13" height="13" rx="1" fill="#4b53bc" /><text x="6.500" y="15" fontSize="10" fontWeight="700" textAnchor="middle" fill="#fff" fontFamily="Liberation Sans">T</text></svg>
      <div className="ml-[13px] w-[44px] h-[37px] bg-[#3b3b3b] flex items-center justify-center">
        <div className="w-[20px] h-[20px] border border-white rounded-[2px] flex items-center justify-center text-[12px] font-bold">C</div>
      </div>
      <svg width="18" height="18" viewBox="0 0 18 18" className="ml-[15px]"><circle cx="9" cy="9" r="7.500" fill="none" stroke="#bbb" strokeWidth="1.300" /><path d="M9 4v5l3 2" fill="none" stroke="#bbb" strokeWidth="1.300" /></svg>
    </div>
    <div className="ml-auto flex items-center pr-[29px]">
      <svg width="20" height="18" viewBox="0 0 20 18"><path d="M1 11L14 1l5 4-4 8-11 4z" fill="#d9d9d9" /><path d="M1 14l8-3" stroke="#6ba843" strokeWidth="2" /></svg>
      <svg width="20" height="20" viewBox="0 0 20 20" className="ml-[11px]"><rect x="0" y="5" width="12" height="12" fill="#4b53bc" /><rect x="10" y="4" width="9" height="9" fill="#7b83eb" /><circle cx="15" cy="15" r="4" fill="#8ebd3e" /></svg>
      <svg width="20" height="20" viewBox="0 0 20 20" className="ml-[10px]"><circle cx="10" cy="10" r="9" fill="#111" stroke="#ddd" /><path d="M10 1c-4 4-4 10 0 12M2 12c4-4 10-2 14 2" fill="none" stroke="#ddd" /><circle cx="5" cy="15" r="4" fill="#c22" /></svg>
      <svg width="20" height="18" viewBox="0 0 20 18" className="ml-[10px]"><rect x="6" y="1" width="14" height="16" fill="#2a8fd8" /><rect x="0" y="3" width="11" height="12" fill="#0f5eaa" /><circle cx="5.500" cy="9" r="2.500" fill="none" stroke="#fff" strokeWidth="1.500" /></svg>
      <svg width="20" height="14" viewBox="0 0 20 14" className="ml-[10px]"><ellipse cx="10" cy="7" rx="10" ry="7" fill="#8b4a2a" /><path d="M1 5c6-2 12-2 18 0M1 9c6-2 12-2 18 0" stroke="#c28755" /></svg>
      <svg width="18" height="18" viewBox="0 0 18 18" className="ml-[10px]"><rect y="0" width="18" height="13" fill="#8a8a8a" /><rect x="0" y="14" width="7" height="4" fill="#8a8a8a" /><rect x="10" y="14" width="7" height="4" fill="#8a8a8a" /></svg>
      <svg width="20" height="20" viewBox="0 0 20 20" className="ml-[11px]"><path d="M9 1L1 3v6c0 5 4 8 8 10z" fill="#fff" /><path d="M11 1l8 2v5h-8z" fill="#fff" /><circle cx="15" cy="15" r="4.500" fill="#0d7a4e" /></svg>
      <svg width="20" height="20" viewBox="0 0 20 20" className="ml-[10px]"><circle cx="9" cy="9" r="8" fill="#b9c6b8" /><rect x="10" y="10" width="9" height="8" fill="#d9b84a" /></svg>
      <svg width="20" height="20" viewBox="0 0 20 20" className="ml-[10px]"><circle cx="9" cy="9" r="9" fill="#1b6aa8" /><path d="M3 11l4-7 3 7 3-5 2 6" fill="none" stroke="#cfe6f8" /><rect x="11" y="12" width="8" height="7" fill="#5fb04b" /></svg>
      <svg width="20" height="13" viewBox="0 0 20 13" className="ml-[10px]"><rect x="4" y="2" width="15" height="10" fill="none" stroke="#fff" /><rect x="6" y="4" width="11" height="6" fill="#fff" /><path d="M0 6h4M2 0v4" stroke="#fff" /></svg>
      <svg width="20" height="18" viewBox="0 0 20 18" className="ml-[10px]"><path d="M3 3h16v10H5M12 13v4M8 17h8M1 1h4v5H1z" fill="none" stroke="#fff" /></svg>
      <svg width="20" height="18" viewBox="0 0 20 18" className="ml-[10px]"><path d="M1 6h3l4-4v14l-4-4H1zM11 6c2 2 2 4 0 6M14 3c3 4 3 8 0 12" fill="none" stroke="#e8e8e8" strokeWidth="1.100" /></svg>
      <span className="ml-[12px] text-[14px] text-[#dedede]">09:11</span>
      <svg width="20" height="19" viewBox="0 0 20 19" className="ml-[24px]"><path d="M.5.500h19v14H12l-2 3-2-3H.5z" fill="none" stroke="#eee" /></svg>
    </div>
  </div>
);

export default function App() {
  return (
    <div className="relative w-[1920px] h-[1080px] overflow-hidden bg-[#f0f2f3] flex flex-col font-['Open_Sans',sans-serif]">
      <TitleBar />
      <MenuBar />
      <Toolbar />
      <div className="flex flex-1 min-h-0">
        <LeftBar />
        <div className="w-[1471px] shrink-0 flex flex-col">
          <Canvas />
          <BottomBar />
        </div>
        <Panel />
        <RightBar />
      </div>
      <Taskbar />
      <Captions />
    </div>
  );
}
